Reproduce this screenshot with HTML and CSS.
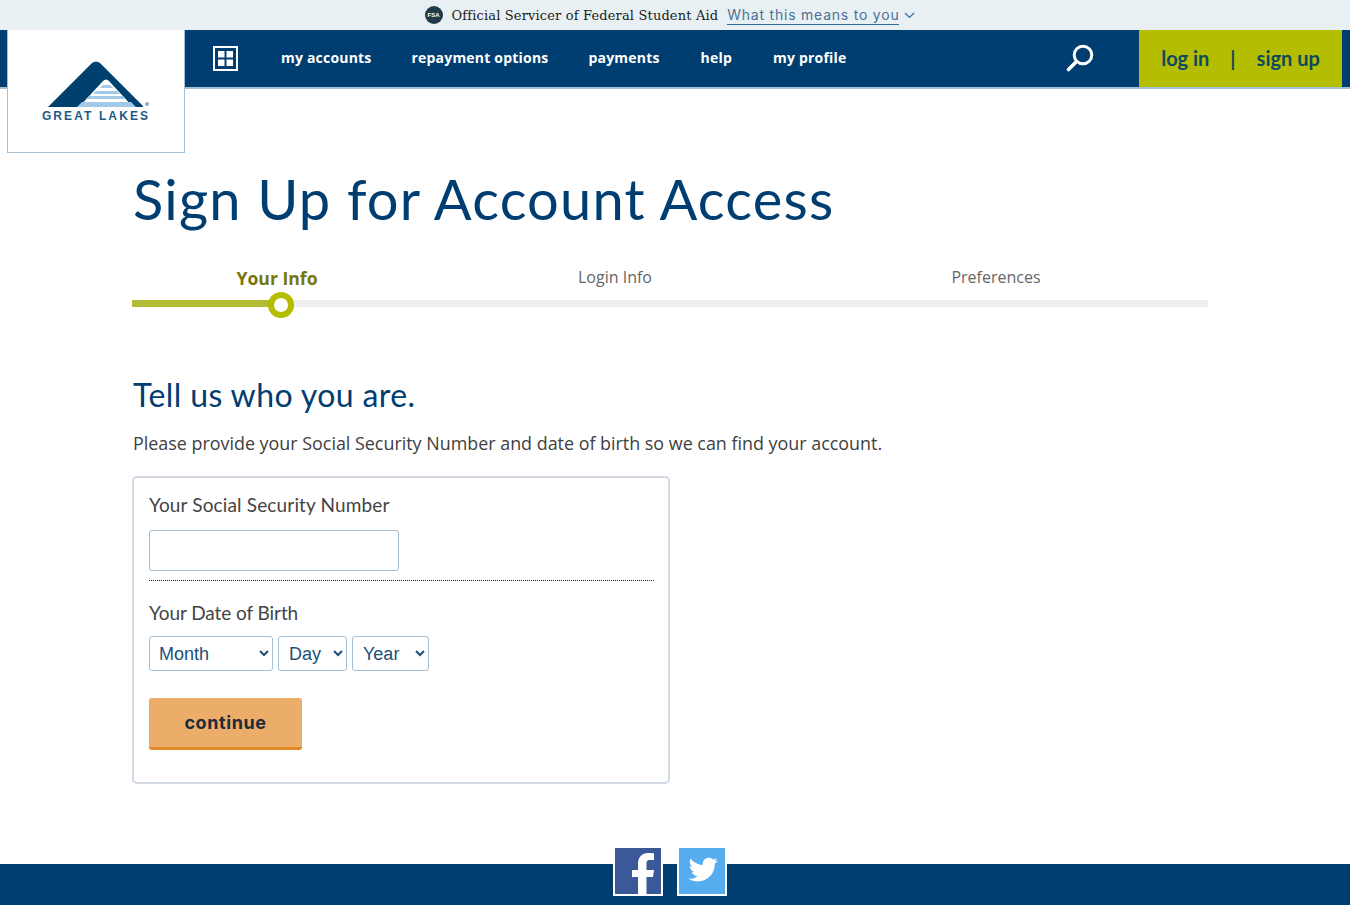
FILE: index.html
```html
<!DOCTYPE html>
<html lang="en">
<head>
  <meta charset="UTF-8" />
  <meta name="viewport" content="width=device-width, initial-scale=1.0"/>
  <title>Sign Up for Account Access | Great Lakes</title>
  <link rel="stylesheet" href="styles.css">
</head>
<body>

<div class="notice">
  <span class="fsa-badge">FSA</span>
  <span class="notice-text">Official Servicer of Federal Student Aid</span>
  <a class="notice-link" href="#">What this means to you</a>
  <svg class="notice-chevron" width="11" height="7" viewBox="0 0 11 7"><path d="M1 1l4.5 4.5L10 1" fill="none" stroke="#2f6f9a" stroke-width="1.2"/></svg>
</div>

<header class="topbar">
  <a class="logo" href="#">
    <svg width="102" height="47" viewBox="0 0 102 47">
      <path d="M0 46 L44 2 Q48 -1 52 2 L95 45 Q96 46 94 46 L85 46 L61 20 Q58 17 55 20 L31 46 Z" fill="#00406f"/>
      <path d="M55 24h7l3 3H52z M48 30h21l3 3H45z M41 35h34l3 3H38z M34 41h49l5 5H29z" fill="#a3c9e6"/>
      <circle cx="99" cy="43" r="2" fill="#8fa9bd"/>
    </svg>
    <span class="logo-name">GREAT LAKES</span>
  </a>
  <nav class="menu">
    <svg class="menu-grid" width="25" height="25" viewBox="0 0 25 25">
      <rect x="1" y="1" width="23" height="23" fill="none" stroke="#fff" stroke-width="2"/>
      <rect x="5" y="5" width="6.500" height="6.500" fill="#fff"/>
      <rect x="13.500" y="5" width="6.500" height="6.500" fill="#fff"/>
      <rect x="5" y="13.500" width="6.500" height="6.500" fill="#fff"/>
      <rect x="13.500" y="13.500" width="6.500" height="6.500" fill="#fff"/>
    </svg>
    <a href="#">my accounts</a>
    <a href="#">repayment options</a>
    <a href="#">payments</a>
    <a href="#">help</a>
    <a href="#">my profile</a>
  </nav>
  <svg class="search" width="30" height="30" viewBox="0 0 30 30">
    <circle cx="18" cy="12" r="8.800" fill="none" stroke="#fff" stroke-width="3"/>
    <path d="M11 19l-7.500 7.500" stroke="#fff" stroke-width="3.600" stroke-linecap="round"/>
  </svg>
  <div class="account-links">
    <a href="#">log in</a>
    <span class="divider">|</span>
    <a href="#">sign up</a>
  </div>
</header>

<main class="content">
  <h1>Sign Up for Account Access</h1>

  <div class="steps">
    <div class="step-labels">
      <span class="step active">Your Info</span>
      <span class="step">Login Info</span>
      <span class="step">Preferences</span>
    </div>
    <div class="track">
      <div class="track-done"></div>
      <div class="track-dot"></div>
    </div>
  </div>

  <h2>Tell us who you are.</h2>
  <p class="intro">Please provide your Social Security Number and date of birth so we can find your account.</p>

  <form class="card">
    <label class="field-label" for="ssn">Your Social Security Number</label>
    <input class="ssn-input" id="ssn" type="text">
    <div class="dots"></div>
    <label class="field-label dob-label" for="month">Your Date of Birth</label>
    <div class="dob">
      <select class="month" id="month"><option>Month</option></select>
      <select class="day"><option>Day</option></select>
      <select class="year"><option>Year</option></select>
    </div>
    <button class="continue-btn" type="button">continue</button>
  </form>
</main>

<footer class="footer">
  <a class="social facebook" href="#">
    <svg width="46" height="46" viewBox="0 0 46 46"><path d="M23 46V29h-6v-7h6v-6c0-7 4-11 10-11 3 0 5 .2 6 .4v6.600h-4c-3 0-3.500 1.400-3.500 3.500V22h7.500l-1 7h-6.500v17z" fill="#fff"/></svg>
  </a>
  <a class="social twitter" href="#">
    <svg width="46" height="46" viewBox="-1 -2 50 50"><path d="M41 11.500c-1.300.6-2.400.8-3.700 1 1.300-.8 2.400-2 2.900-3.600-1.300.8-2.700 1.300-4.200 1.600-1.200-1.300-2.900-2-4.700-2-3.600 0-6.500 2.900-6.500 6.500 0 .5.100 1 .2 1.500-5.400-.3-10.200-2.900-13.400-6.800-.6 1-.9 2.100-.9 3.300 0 2.200 1.200 4.200 2.900 5.400-1.100 0-2.100-.3-2.900-.8v.1c0 3.100 2.200 5.800 5.200 6.400-.5.100-1.100.2-1.700.2-.4 0-.8 0-1.200-.1.800 2.600 3.200 4.500 6.100 4.500-2.200 1.800-5 2.800-8.100 2.800-.5 0-1 0-1.600-.1 2.900 1.900 6.300 2.900 10 2.900 12 0 18.600-10 18.600-18.600v-.8c1.300-.9 2.400-2.100 3.200-3.400z" fill="#fff"/></svg>
  </a>
</footer>

</body>
</html>
```

FILE: styles.css
```css
* {
  box-sizing: border-box;
}

body {
  margin: 0;
  height: 905px;
  overflow: hidden;
  display: flex;
  flex-direction: column;
  font-family: 'Open Sans', sans-serif;
  background-color: #ffffff;
  color: #333333;
}

a {
  text-decoration: none;
}

.notice {
  height: 30px;
  display: flex;
  align-items: center;
  justify-content: center;
  padding-right: 10px;
  background-color: #e9f0f4;
}

.fsa-badge {
  width: 18px;
  height: 18px;
  margin-right: 9px;
  border-radius: 50%;
  background-color: #1f3b47;
  color: #ffffff;
  font-family: 'Liberation Sans', sans-serif;
  font-size: 6px;
  font-weight: bold;
  line-height: 18px;
  text-align: center;
}

.notice-text {
  margin-right: 9px;
  font-family: 'DejaVu Serif', serif;
  font-size: 13px;
  letter-spacing: 0.15px;
  color: #1b1b1b;
}

.notice-link {
  margin-right: 5px;
  border-bottom: 1px solid #2f6f9a;
  font-family: 'Inter', sans-serif;
  font-size: 14px;
  line-height: 18px;
  letter-spacing: 0.78px;
  color: #4a7295;
}

.topbar {
  height: 59px;
  display: flex;
  align-items: flex-start;
  padding: 0 8px 0 7px;
  background-color: #003e71;
  border-bottom: 2px solid #a3c0d6;
}

.logo {
  width: 178px;
  height: 123px;
  flex-shrink: 0;
  display: flex;
  flex-direction: column;
  align-items: center;
  padding: 31px 0 0 6px;
  background-color: #ffffff;
  border: 1px solid #a3c0d6;
  border-top: none;
  position: relative;
}

.logo-name {
  margin: 1px 6px 0 0;
  font-family: 'Liberation Sans', sans-serif;
  font-size: 12px;
  font-weight: bold;
  letter-spacing: 2.1px;
  line-height: 14px;
  white-space: nowrap;
  color: #1f5a88;
}

.menu {
  height: 55px;
  display: flex;
  align-items: center;
  padding-left: 28px;
}

.menu-grid {
  margin: 2px 43px 0 0;
}

.menu a {
  margin-right: 41px;
  font-size: 14px;
  font-weight: bold;
  letter-spacing: 0.2px;
  color: #ffffff;
}

.menu a:first-of-type {
  margin-right: 40px;
}

.menu a:nth-of-type(2) {
  margin-right: 40px;
}

.search {
  margin: 13px 44px 0 auto;
}

.account-links {
  width: 203px;
  height: 57px;
  display: flex;
  align-items: center;
  justify-content: center;
  gap: 21px;
  padding-bottom: 2px;
  background-color: #b5bd00;
  font-family: 'Lato', sans-serif;
  font-size: 20px;
  font-weight: bold;
  color: #0d4a5e;
}

.account-links a {
  color: #0d4a5e;
}

.content {
  padding-left: 132px;
}

h1 {
  margin: 78px 0 0 1px;
  font-family: 'Lato', sans-serif;
  font-size: 56px;
  font-weight: 400;
  letter-spacing: 1.2px;
  line-height: 64px;
  color: #003e71;
}

.steps {
  width: 1076px;
  margin-top: 35px;
}

.step-labels {
  display: grid;
  grid-template-columns: 290px 386px 376px;
  text-align: center;
}

.step {
  font-size: 16px;
  line-height: 22px;
  color: #666666;
}

.step.active {
  margin-top: 1px;
  font-size: 17.6px;
  font-weight: bold;
  color: #78760f;
}

.track {
  height: 7px;
  margin-top: 11px;
  position: relative;
  background-color: #eeeeee;
}

.track-done {
  width: 140px;
  height: 7px;
  background-color: #b3bb35;
}

.track-dot {
  position: absolute;
  left: 136px;
  top: -8px;
  width: 26px;
  height: 26px;
  border: 6px solid #b5bd00;
  border-radius: 50%;
  background-color: #ffffff;
}

h2 {
  margin: 69px 0 0 1px;
  font-family: 'Lato', sans-serif;
  font-size: 32px;
  font-weight: 400;
  letter-spacing: 0.4px;
  line-height: 38px;
  color: #003e71;
}

.intro {
  margin: 17px 0 0 1px;
  font-size: 17.9px;
  line-height: 24px;
  color: #404040;
}

.card {
  width: 538px;
  height: 308px;
  margin-top: 21px;
  padding: 15px 14px 0 15px;
  border: 2px solid #d3dae6;
  border-radius: 5px;
}

.field-label {
  display: block;
  font-family: 'Lato', sans-serif;
  font-size: 19px;
  letter-spacing: 0.15px;
  line-height: 24px;
  color: #444444;
}

.ssn-input {
  display: block;
  width: 250px;
  height: 41px;
  margin-top: 13px;
  border: 1px solid #a3c0d6;
  border-radius: 3px;
  background-color: #ffffff;
}

.dots {
  margin-top: 9px;
  border-top: 1px dotted #222222;
}

.dob-label {
  margin-top: 20px;
  letter-spacing: -0.07px;
}

.dob {
  display: flex;
  gap: 5px;
  margin-top: 11px;
}

.dob select {
  height: 35px;
  padding: 0 2px 0 5px;
  border: 1px solid #a3c0d6;
  border-radius: 3px;
  background-color: #ffffff;
  font-family: 'Liberation Sans', sans-serif;
  font-size: 18px;
  color: #1d4f78;
}

.month {
  width: 124px;
}

.dob .day {
  width: 69px;
  padding-left: 6px;
}

.dob .year {
  width: 77px;
  padding-left: 6px;
}

.continue-btn {
  display: block;
  width: 153px;
  height: 52px;
  margin-top: 27px;
  padding: 0;
  border: none;
  border-bottom: 3px solid #e08a26;
  border-radius: 3px;
  background-color: #ebad69;
  font-family: 'Inter', sans-serif;
  font-size: 18px;
  font-weight: 700;
  letter-spacing: 0.6px;
  color: #1d2a3a;
}

.footer {
  height: 41px;
  margin-top: auto;
  display: flex;
  justify-content: center;
  gap: 14px;
  padding-right: 10px;
  background-color: #003e71;
}

.social {
  width: 50px;
  height: 48px;
  margin-top: -16px;
  border: 2px solid #ffffff;
  border-top: none;
}

.social svg {
  display: block;
}

.facebook {
  background-color: #3b5998;
}

.twitter {
  background-color: #55acee;
}
```
